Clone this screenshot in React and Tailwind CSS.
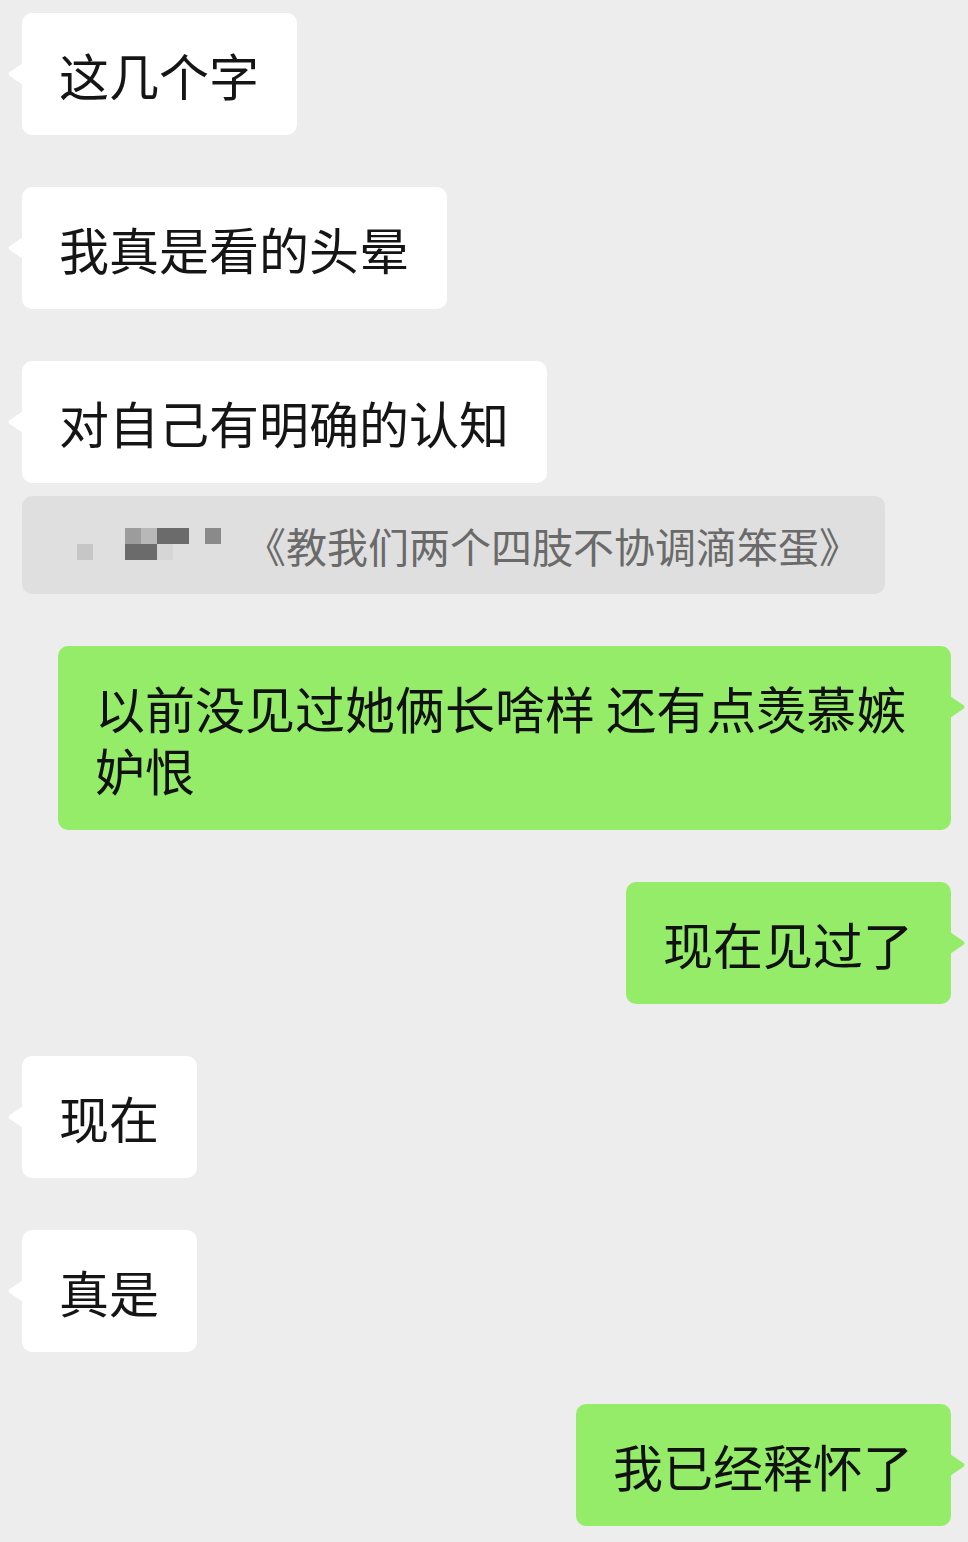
const font = { fontFamily: '"Noto Sans CJK SC", "Noto Sans", sans-serif' };

function Tail({ side, color }) {
  if (side === "left") {
    return (
      <svg
        className="absolute left-[-15px] top-[50px]"
        width="16"
        height="22"
        viewBox="0 0 16 22"
      >
        <path d="M16 0 L2.5 9.2 Q0.5 11 2.5 12.8 L16 22 Z" fill={color} />
      </svg>
    );
  }
  return (
    <svg
      className="absolute right-[-15px] top-[50px]"
      width="16"
      height="22"
      viewBox="0 0 16 22"
    >
      <path d="M0 0 L13.5 9.2 Q15.5 11 13.5 12.8 L0 22 Z" fill={color} />
    </svg>
  );
}

function Left({ text }) {
  return (
    <div className="flex justify-start pl-[22px]">
      <div className="relative rounded-[10px] bg-white py-[30px] pl-[37px] pr-[38px] text-[50px] leading-[62px] text-[#151515]">
        <Tail side="left" color="#ffffff" />
        {text}
      </div>
    </div>
  );
}

function Right({ text }) {
  return (
    <div className="flex justify-end pr-[17px]">
      <div className="relative max-w-[893px] rounded-[10px] bg-[#95ec69] py-[30px] pl-[37px] pr-[38px] text-[50px] leading-[62px] text-[#111]">
        <Tail side="right" color="#95ec69" />
        {text}
      </div>
    </div>
  );
}

// mosaic over the quoted sender name
const mosaic = [
  ["", "", "", "#9c9c9c", "#b8b8b8", "#6b6b6b", "#6b6b6b", "", "#8a8a8a"],
  ["#c6c6c6", "", "", "#6b6b6b", "#6b6b6b", "#d6d6d6", "", "", ""],
];

function Quote() {
  return (
    <div className="mt-[-39px] flex pl-[22px]">
      <div className="flex h-[98px] w-[863px] items-center rounded-[10px] bg-[#dfdfdf] pl-[55px]">
        <div className="mt-[-3px] grid grid-cols-[repeat(9,16px)] grid-rows-[repeat(2,16px)]">
          {mosaic.flat().map((c, i) => (
            <div key={i} style={{ backgroundColor: c || "transparent" }} />
          ))}
        </div>
        <span className="ml-[24px] text-[41px] leading-[50px] text-[#6a6a6a]">
          《教我们两个四肢不协调滴笨蛋》
        </span>
      </div>
    </div>
  );
}

export default function App() {
  return (
    <div
      className="flex min-h-[1542px] w-[968px] flex-col gap-[52px] bg-[#ededed] pt-[13px]"
      style={font}
    >
      <Left text="这几个字" />
      <Left text="我真是看的头晕" />
      <Left text="对自己有明确的认知" />
      <Quote />
      <Right text="以前没见过她俩长啥样 还有点羡慕嫉妒恨" />
      <Right text="现在见过了" />
      <Left text="现在" />
      <Left text="真是" />
      <Right text="我已经释怀了" />
    </div>
  );
}
